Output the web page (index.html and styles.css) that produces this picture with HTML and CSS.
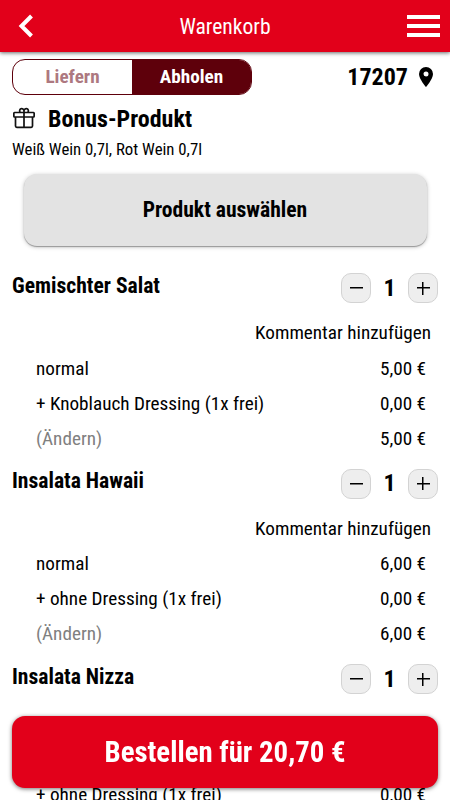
FILE: index.html
```html
<!DOCTYPE html>
<html lang="de">
<head>
<meta charset="utf-8">
<title>Warenkorb</title>
<link rel="stylesheet" href="styles.css">
</head>
<body>
<header class="bar">
  <svg class="back" width="16" height="24" viewBox="0 0 16 24"><path d="M13.500 2 3.500 12l10 10" fill="none" stroke="#fff" stroke-width="4"/></svg>
  <h1 class="title"><span class="t">Warenkorb</span></h1>
  <div class="menu"><i></i><i></i><i></i></div>
</header>
<main class="page">
  <div class="mode">
    <div class="toggle"><span class="opt"><span class="t">Liefern</span></span><span class="opt on"><span class="t">Abholen</span></span></div>
    <div class="place"><span class="t">17207</span><svg width="14" height="20" viewBox="0 0 14 20"><path fill="#000" fill-rule="evenodd" d="M7 0a7 7 0 0 0-7 7c0 5 7 13 7 13s7-8 7-13a7 7 0 0 0-7-7Zm0 4.500a2.500 2.500 0 1 1 0 5 2.500 2.500 0 0 1 0-5Z"/></svg></div>
  </div>
  <div class="bonus">
    <svg width="24" height="22" viewBox="0 0 24 22" fill="none" stroke="#111" stroke-width="1.700"><rect x="1.850" y="5.500" width="20.300" height="4.500" rx=".7"/><path d="M3.500 10v9q0 1.300 1.300 1.300h14.400q1.300 0 1.300-1.300v-9M12 5v15.300"/><path d="M8.200 5.300A2.200 2.200 0 1 1 12 3.600V5.500M15.800 5.300A2.200 2.200 0 1 0 12 3.600"/></svg>
    <h2 class="t">Bonus-Produkt</h2>
  </div>
  <p class="wines"><span class="t">Weiß Wein 0,7l, Rot Wein 0,7l</span></p>
  <button class="choose"><span class="t">Produkt auswählen</span></button>

  <section class="item">
    <div class="head"><h3 class="t">Gemischter Salat</h3><div class="qty"><button class="step"><i></i></button><b class="t">1</b><button class="step plus"><i></i></button></div></div>
    <div class="comment"><span class="t">Kommentar hinzufügen</span></div>
    <div class="line"><span class="t">normal</span><span class="t r">5,00 €</span></div>
    <div class="line"><span class="t">+ Knoblauch Dressing (1x frei)</span><span class="t r">0,00 €</span></div>
    <div class="line"><span class="t edit">(Ändern)</span><span class="t r">5,00 €</span></div>
  </section>
  <section class="item">
    <div class="head"><h3 class="t">Insalata Hawaii</h3><div class="qty"><button class="step"><i></i></button><b class="t">1</b><button class="step plus"><i></i></button></div></div>
    <div class="comment"><span class="t">Kommentar hinzufügen</span></div>
    <div class="line"><span class="t">normal</span><span class="t r">6,00 €</span></div>
    <div class="line"><span class="t">+ ohne Dressing (1x frei)</span><span class="t r">0,00 €</span></div>
    <div class="line"><span class="t edit">(Ändern)</span><span class="t r">6,00 €</span></div>
  </section>
  <section class="item">
    <div class="head"><h3 class="t">Insalata Nizza</h3><div class="qty"><button class="step"><i></i></button><b class="t">1</b><button class="step plus"><i></i></button></div></div>
    <div class="comment"><span class="t">Kommentar hinzufügen</span></div>
    <div class="line"><span class="t">normal</span><span class="t r">6,00 €</span></div>
    <div class="line"><span class="t">+ ohne Dressing (1x frei)</span><span class="t r">0,00 €</span></div>
  </section>
</main>
<button class="order"><span class="t">Bestellen für 20,70 €</span></button>
</body>
</html>
```
FILE: styles.css
```css
* { box-sizing: border-box; }
body { margin: 0; height: 800px; overflow: hidden; background: #fff; color: #000; font-family: "Roboto Condensed", Roboto, sans-serif; font-stretch: 75%; font-size: 19.200px; font-weight: 400; letter-spacing: 0; }
h1, h2, h3, p { margin: 0; font-size: inherit; }
h2, h3, b { font-weight: 700; letter-spacing: 0; }
button { border: 0; padding: 0; font: inherit; font-stretch: 75%; letter-spacing: 0; color: inherit; }
.t { display: inline-block; white-space: nowrap; }
.bar { height: 52px; background: #e2001a; color: #fff; box-shadow: 0 1px 4px rgba(0,0,0,.6); display: flex; align-items: center; justify-content: space-between; padding: 0 10px 0 18px; }
.back { margin-right: 9px; }
.title { font-size: 21.600px; font-weight: 400; letter-spacing: 0; }
.menu { width: 33px; display: grid; gap: 5px; }
.menu i { height: 4px; background: #fff; }
.page { padding: 7px 12px 0; }
.mode { display: flex; justify-content: space-between; height: 36px; align-items: center; }
.toggle { display: flex; width: 240px; height: 36px; border: 1px solid #5e000b; border-radius: 13px; overflow: hidden; font-weight: 700; }
.opt { flex: 1; display: flex; align-items: center; justify-content: center; color: #ad7880; height: 32px; }
.opt.on { height: 34px; padding-bottom: 2px; }
.on { background: #5e000b; color: #fff; }
.place { display: flex; align-items: center; gap: 11px; font-size: 24px; font-weight: 700; letter-spacing: 0; padding-right: 5px; padding-bottom: 1px; }
.bonus { display: flex; align-items: center; height: 48px; gap: 12px; font-size: 24px; }
.bonus svg { margin-bottom: 2px; }
.wines { height: 31px; line-height: 12px; font-size: 16.800px; }
.choose { display: block; width: 403px; height: 72px; margin: 0 11.500px; border-radius: 13px; background: #e3e3e3; box-shadow: 0 1px 1px rgba(0,0,0,.3), 0 1px 4px rgba(0,0,0,.25); font-size: 21.600px; font-weight: 700; }
.choose .t { padding-bottom: 1px; }
.item { height: 195.500px; }
.choose + .item { margin-top: 26.600px; }
.head { height: 31px; display: flex; justify-content: space-between; font-size: 21.600px; line-height: 25px; }
.qty { display: flex; align-items: center; font-size: 24px; }
.qty b { width: 37px; text-align: center; }
.step { width: 30px; height: 30px; border: 1px solid #d3d3d3; border-radius: 10px; background: #eee; display: grid; place-items: center; }
.step i { width: 13px; height: 13px; background: linear-gradient(#000, #000) center / 13px 1.500px no-repeat; }
.plus i { background: linear-gradient(#000, #000) center / 13px 1.500px no-repeat, linear-gradient(#000, #000) center / 1.500px 13px no-repeat; }
.comment { height: 47px; padding: 17.500px 7px 0; line-height: 24px; text-align: right; }
.line { height: 35px; display: flex; align-items: center; justify-content: space-between; padding: 0 12px 0 24px; }
.edit { color: #808080; }
.order { position: fixed; left: 12px; bottom: 12px; width: 426px; height: 72px; border-radius: 13px; background: #e2001a; color: #fff; box-shadow: 0 1px 4px rgba(0,0,0,.55); font-size: 28.800px; font-weight: 700; }
```
